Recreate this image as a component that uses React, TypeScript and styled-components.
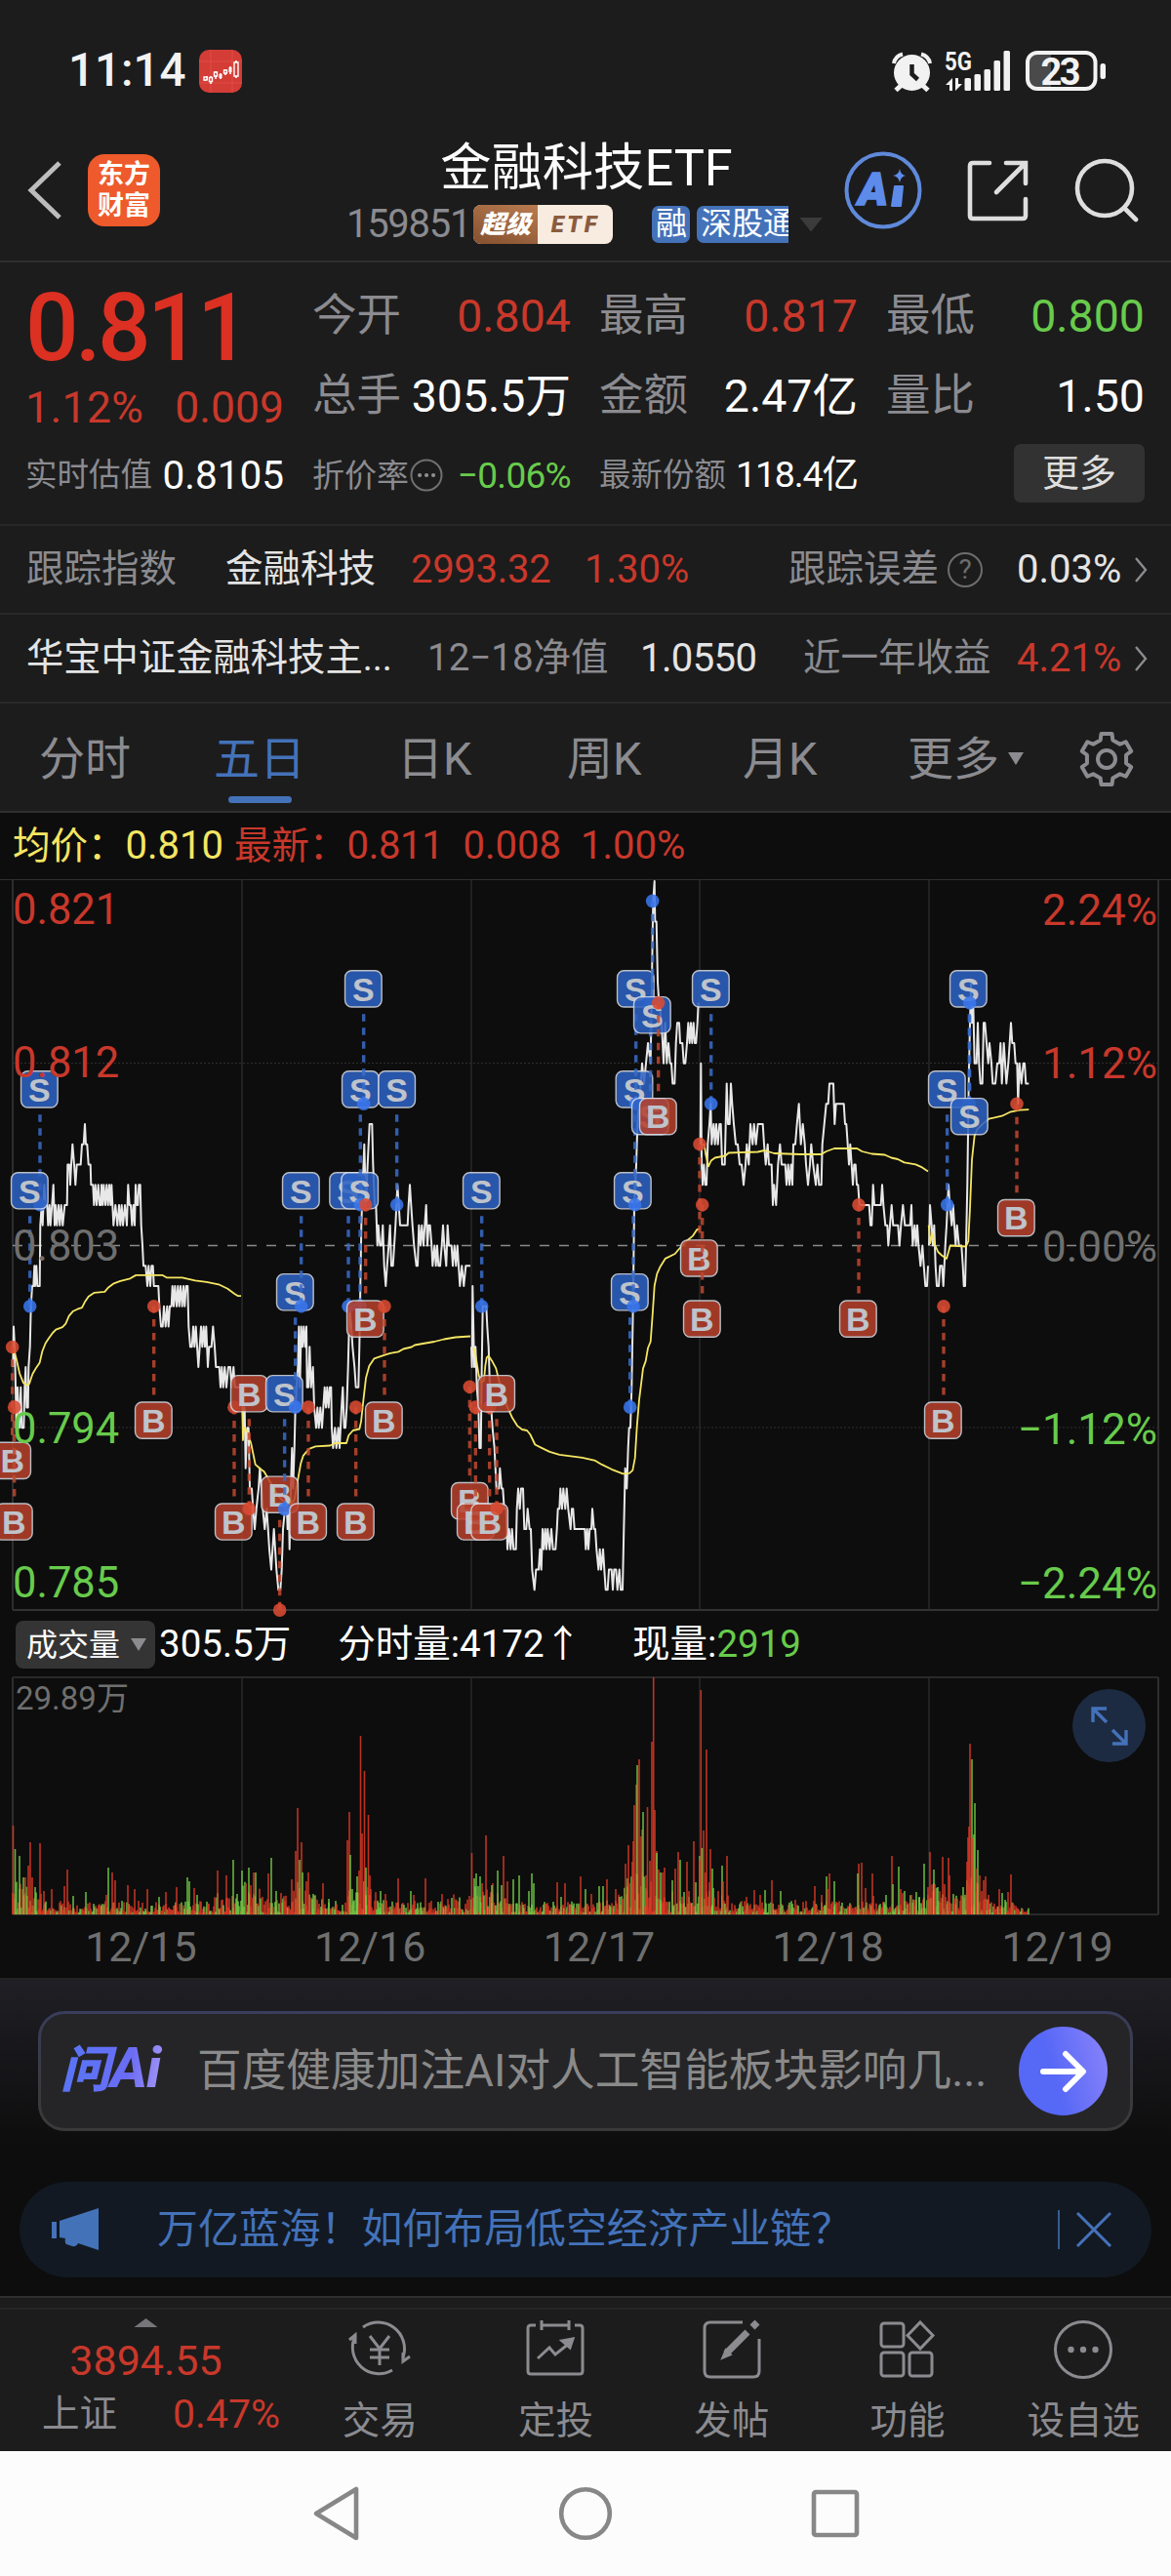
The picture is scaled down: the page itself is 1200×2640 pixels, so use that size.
import styled, { createGlobalStyle } from "styled-components";

const C = {
  bg: "#1c1c1c",
  chart: "#0d0d0d",
  line: "#2f2f2f",
  red: "#c8382b",
  hot: "#db3022",
  green: "#68cb4c",
  grey: "#8b8b90",
  dim: "#6f6f6f",
  white: "#ffffff",
  soft: "#e4e4e4",
  blue: "#4472b9",
  yellow: "#f5e663",
};

/*
=========== CHART DATA =================
x is stored in thirds of a pixel from the origin of its segment,
the second number is the distance from the previous close in ticks
*/
type Segment = { origin: number; data: string };

const PRICE: Segment[] = [
  {
    origin: 0,
    data: "40,-6 42,-4 45,-5 48,-7 50,-9 54,-7 57,-8 60,-9 64,-7 67,-9 73,-9 76,-7 79,-6 82,-8 86,-8 88,-6 92,-5 95,-3 99,-2 103,-2 106,-1 108,-2 112,-1 115,-2 122,-2 124,1 128,2 131,1 136,3 140,2 145,2 148,1 152,2 155,1 160,2 164,3 168,1 171,2 175,1 180,2 184,1 188,2 193,1 199,2 206,2 208,4 213,4 216,3 219,4 223,5 228,4 232,3 236,4 248,4 252,5 257,5 261,6 264,5 268,5 272,4 278,4 280,3 286,3 289,2 293,3 297,2 302,3 306,2 310,2 312,3 316,2 319,3 324,2 328,3 332,2 336,3 340,2 343,3 346,2 349,1 355,2 361,1 366,2 370,1 374,2 378,1 384,2 390,1 394,3 398,2 402,2 406,1 410,2 414,1 417,3 421,2 424,2 427,3 431,3 434,1 438,0 441,-1 448,-1 453,-2 457,-1 462,-2 466,-1 470,-1 473,-2 487,-2 490,-3 495,-4 500,-4 504,-3 509,-4 514,-3 518,-4 522,-3 527,-3 530,-2 534,-3 538,-2 543,-3 547,-2 551,-3 555,-2 560,-3 564,-2 568,-3 572,-2 577,-2 580,-4 585,-5 590,-5 594,-4 598,-5 602,-4 606,-5 610,-6 614,-5 618,-4 622,-5 626,-4 630,-5 634,-4 639,-6 643,-5 650,-5 655,-4 660,-5 664,-6 674,-6 678,-7 682,-6 686,-7 691,-6 696,-7 702,-6 708,-6 712,-7 718,-6 722,-7 740,-7",
  },
  {
    origin: 0,
    data: "744,-7 748,-9 752,-8 755,-11 760,-9 764,-9 768,-12 774,-12 778,-13 783,-14 788,-13 795,-12 799,-11 804,-12 808,-13 814,-14 820,-13 824,-14 828,-15 834,-16 838,-15 842,-14 846,-15 850,-16 856,-17 862,-17 866,-16 870,-14 876,-13 880,-12 884,-14 888,-13 890,-15 894,-12 898,-10 901,-12 905,-10 908,-8 912,-7 916,-6 919,-4 922,-7 926,-4 930,-5 934,-4 938,-5 942,-4 944,-7 948,-7 952,-5 956,-7 962,-6 966,-8 972,-9 976,-8 980,-9 985,-8 990,-9 994,-8 998,-7 1002,-8 1006,-7 1010,-8 1014,-7 1018,-7 1020,-9 1024,-10 1030,-9 1034,-10 1040,-9 1044,-10 1050,-8 1054,-7 1058,-9 1062,-9 1066,-8 1070,-6 1075,-3 1080,-4 1084,-5 1090,-6 1094,-7 1102,-7 1105,-5 1108,-2 1111,1 1115,3 1120,5 1125,2 1130,4 1136,6 1144,6 1147,4 1152,2 1156,2 1160,0 1163,1 1168,0 1173,0 1177,1 1181,-1 1186,-2 1190,-1 1195,0 1199,1 1203,-1 1208,-1 1212,0 1216,1 1222,3 1230,1 1253,1 1256,2 1260,3 1264,2 1268,1 1273,0 1280,-1 1284,-1 1288,1 1293,0 1297,1 1302,0 1306,1 1310,2 1314,0 1318,1 1322,1 1327,0 1330,-1 1336,0 1340,-1 1344,0 1348,-1 1353,-1 1358,0 1362,1 1366,0 1372,-1 1376,1 1380,0 1388,0 1392,-1 1397,0 1402,-1 1406,0 1410,-1 1414,-2 1420,-1 1426,-2 1432,-1 1446,-1",
  },
  {
    origin: 1350,
    data: "99,-5 101,-6 103,-2 108,-6 112,-5 116,-7 121,-8 124,-10 128,-10 131,-6 134,-3 145,-3 148,-4 152,-5 156,-7 160,-8 164,-9 170,-10 176,-12 184,-12 187,-11 192,-12 196,-12 200,-13 206,-13 210,-15 215,-14 220,-15 224,-14 229,-15 236,-15 239,-13 243,-12 248,-13 252,-12 258,-12 262,-14 268,-14 272,-13 278,-14 282,-14 286,-16 293,-17 298,-16 306,-16 310,-15 314,-16 318,-14 322,-15 326,-14 330,-15 334,-14 340,-15 345,-14 350,-15 358,-15 362,-14 365,-13 370,-13 373,-12 378,-13 382,-12 388,-13 392,-12 397,-13 404,-14 408,-13 412,-13 416,-14 448,-14 451,-15 455,-14 459,-15 463,-14 468,-14 471,-13 476,-14 480,-14 484,-15 490,-16 494,-15 498,-16 504,-15 508,-16 512,-17 518,-17 522,-16 530,-16 534,-17 538,-16 544,-16 548,-17 554,-16 558,-17 564,-17 568,-14 572,-11 577,-12 581,-10 584,-9 588,-9 592,-7 596,-3 600,2 606,4 610,6 614,7 620,8 624,9 630,8 636,9 642,10 650,9 654,13 658,17 662,18 664,16 668,16 672,13 676,12 684,11 690,9 695,11 700,9 705,10 710,9 714,9 718,8 724,8 728,10 732,11 738,11 741,10 748,10 752,9 757,9 762,10 766,11 770,10 774,11 778,10 782,11 786,10 790,10 794,11 797,12",
  },
  {
    origin: 1350,
    data: "803,5 805,9 807,4 810,3 814,4 818,3 822,3 826,5 831,6 835,7 838,5 844,6 848,5 852,6 857,5 862,6 866,6 870,4 878,4 881,6 884,8 888,6 893,6 897,8 901,7 906,6 912,5 918,5 924,4 930,4 936,3 942,4 946,5 952,4 957,6 964,5 968,6 974,5 980,6 995,6 999,5 1004,4 1010,5 1014,4 1022,4 1026,2 1030,3 1036,2 1042,4 1048,5 1053,4 1064,4 1068,3 1073,4 1077,3 1082,4 1086,3 1089,5 1095,5 1100,6 1106,7 1112,5 1118,6 1124,5 1128,4 1134,3 1140,4 1144,5 1150,4 1158,3 1163,4 1168,3 1175,3 1178,5 1184,6 1190,7 1196,7 1200,8 1212,8 1216,6 1220,7 1244,7 1248,6 1252,6 1256,5 1260,4 1264,5 1268,4 1272,3 1276,4 1280,4 1284,3 1288,3 1292,2 1322,2 1326,1 1330,1 1334,3 1338,2 1358,2 1362,3 1366,2 1372,1 1378,1 1381,0 1386,1 1391,2 1396,1 1411,1 1415,0 1420,1 1426,2 1432,1 1448,1 1452,2 1456,0 1462,1 1466,0 1470,1 1474,0 1480,-1 1486,0 1490,-1 1495,-2 1500,-2 1503,-1",
  },
  {
    origin: 2400,
    data: "456,0 459,2 464,1 468,0 472,1 476,-1 480,-2 486,-2 490,-1 496,-1 500,-2 506,0 510,1 516,3 520,2 526,1 530,2 534,1 538,0 542,1 548,0 556,0 560,-1 563,-2 567,-2 570,0 574,3 578,8 582,11 585,13 588,11 592,12 596,9 602,9 606,11 610,9 614,8 620,8 624,11 628,11 633,10 638,9 642,10 648,9 652,8 660,8 666,9 672,9 676,10 680,8 686,10 690,9 694,8 700,9 704,10 708,11 712,10 718,10 722,9 727,9 730,7 734,9 740,8 746,9 750,9 754,8 763,8",
  },
];

// moving average, the second number is the depth below the chart's top edge
const AVERAGE: Segment[] = [
  {
    origin: 0,
    data: "40,985 50,1010 60,1040 72,1060 82,1064 90,1062 100,1042 112,1028 122,1018 130,995 140,978 150,968 162,957 172,950 192,945 202,938 212,922 225,912 238,908 252,905 262,892 272,882 290,874 322,872 332,864 350,855 370,850 400,845 418,838 500,838 512,843 560,843 600,849 635,852 672,857 700,866 720,876 732,881 741,881",
  },
  {
    origin: 0,
    data: "745,1110 747,1178 750,1152 760,1160 772,1185 785,1228 800,1237 812,1243 825,1258 840,1275 855,1293 870,1303 893,1310 905,1300 915,1262 925,1225 932,1210 950,1196 970,1191 1015,1189 1030,1184 1065,1184 1072,1168 1085,1158 1105,1155 1110,1140 1118,1090 1125,1050 1135,1025 1150,1010 1185,1002 1200,999 1225,996 1240,990 1265,986 1275,982 1300,979 1335,975 1365,970 1400,966 1446,964",
  },
  {
    origin: 1350,
    data: "103,990 108,990 115,1015 122,1045 130,1060 138,1055 142,1025 146,1008 152,1004 162,1014 175,1030 185,1058 195,1085 210,1110 225,1132 240,1148 255,1156 270,1158 280,1166 295,1187 315,1194 340,1202 370,1208 440,1214 480,1220 500,1228 530,1238 565,1247 585,1246 595,1240 602,1215 608,1150 615,1095 627,1030 635,1015 642,988 650,975 656,920 662,860 670,835 680,820 695,804 725,794 735,786 760,768 780,757 793,744 802,742",
  },
  {
    origin: 1350,
    data: "808,570 815,568 820,590 828,614 836,602 848,596 880,592 890,586 980,584 1000,581 1030,587 1110,589 1150,589 1175,589 1190,583 1215,577 1285,577 1300,583 1330,588 1370,590 1390,596 1410,599 1430,606 1465,610 1485,616 1503,624",
  },
  {
    origin: 2400,
    data: "455,735 460,772 466,752 474,775 484,790 495,797 510,804 516,790 521,777 570,779 577,768 582,700 588,600 596,550 605,537 620,527 640,516 680,510 705,502 735,498 763,497",
  },
];

// [side, badge x, badge y, dot x, dot y]
type Mark = ["B" | "S", number, number, number, number];

const MARKS: Mark[] = [
  ["S", 121, 455, 123, 693],
  ["S", 91, 664, 92, 902],
  ["B", 38, 1220, 38, 986],
  ["B", 43, 1346, 44, 1110],
  ["B", 472, 1137, 473, 902],
  ["B", 718, 1346, 720, 1110],
  ["B", 766, 1082, 766, 1319],
  ["B", 860, 1290, 860, 1528],
  ["S", 874, 1082, 875, 1320],
  ["S", 907, 873, 908, 1110],
  ["S", 925, 664, 926, 902],
  ["B", 947, 1346, 948, 1110],
  ["S", 1070, 664, 1071, 902],
  ["B", 1093, 1346, 1094, 1110],
  ["S", 1106, 664, 1107, 902],
  ["S", 1108, 455, 1108, 693],
  ["S", 1117, 248, 1118, 485],
  ["B", 1123, 928, 1124, 693],
  ["B", 1180, 1137, 1182, 902],
  ["S", 1220, 455, 1220, 693],
  ["B", 1444, 1303, 1444, 1068],
  ["B", 1462, 1346, 1462, 1110],
  ["S", 1480, 664, 1481, 902],
  ["B", 1505, 1346, 1505, 1110],
  ["B", 1526, 1082, 1527, 1319],
  ["S", 1936, 873, 1937, 1110],
  ["S", 1945, 664, 1947, 902],
  ["S", 1950, 455, 1952, 693],
  ["S", 1954, 248, 1955, 485],
  ["S", 1999, 511, 2000, 277],
  ["S", 2005, 302, 2006, 67],
  ["B", 2023, 511, 2024, 277],
  ["B", 2149, 803, 2151, 568],
  ["B", 2158, 928, 2159, 693],
  ["S", 2185, 248, 2186, 485],
  ["B", 2638, 928, 2640, 693],
  ["B", 2899, 1137, 2901, 902],
  ["S", 2911, 455, 2912, 693],
  ["S", 2977, 248, 2980, 485],
  ["S", 2980, 511, 2981, 277],
  ["B", 3124, 720, 3126, 485],
];

// traded volume peaks: x, colour, height
const PEAKS =
  "13.5r91 15.5g67 20g60 24g38 26r38 31r74 29r50 33r38 36g28 41r73 45r24 53r26 66r29 69r46 75g19 88g23 111g48 109r20 115r43 118r35 131r30 138r26 151r26 163g18 170r23 181r28 192g38 194g34 199r27 202g20 223r45 232r40 239g56 248g45 255g48 252r32 260r43 257r30 262g43 275r42 278g58 283g24 288r22 299r36 303r65 305r109 307g56 309r74 310g43 314r34 316r43 321g21 331r32 337g16 356r76 358r105 359g61 361g26 366g39 368r45 369.5r183 371r83 373.5r147 377.5r102 379r40 375g48 390g24 395r21 408r37 421g24 424r20 436r37 453r21 483.5r63 486g37 488g42 492g39 498r81 494r32 505r32 504g30 510g45 516r60 514g30 520r34 526g36 532g40 545g42 542g24 547g32 571r33 579r32 575g18 595r39 600g26 606r21 614g29 618g29 622r36 631r26 635g18 641r52 643g37 644r71 648r54 649r75 650r112 652r133 653g153 655r159 657r80 658r87 659g105 662r40 663.5r110 666r55 668r177 669.7r243 671r107 673r65 673g63 675r46 677g43 679r43 681r48 689g35 692r47 695r64 697g56 704r54 701g23 706r24 711r75 713g33 717g60 717r56 718.3r230 719.5g68 721r86 723r43 724r169 728r67 727r33 730g47 740g50 741r34 745r60 765r18 773r25 779r20 784g25 791r35 800g24 815r15 835r29 842r20 847g39 848r26 850r42 855g34 880r52 879g42 883r53 887r27 894r42 895r19 908g20 914r60 915g31 921g49 923r26 927g24 934r20 939g23 942g18 947g52 951r28 953r64 957g46 958r31 961g28 966r59 968r31 972r58 973r40 987g28 991r54 992r79 993r90 994r175 996g159 996.5r78 998g82 999g114 1000r47 1002g66 1004r40 1006r24 1008r35 1010r39 1013r20 1024r26 1027g22 1030g15 1033r23 1036r41";

const VERTICALS = [13, 248, 483, 717, 952, 1187];
const DATES = ["12/15", "12/16", "12/17", "12/18", "12/19"];

const depth = (v: number) => v / 2.0103 - 11;

const toPath = ({ origin, data }: Segment, y: (v: number) => number) =>
  data
    .split(" ")
    .map((pair) => pair.split(",").map(Number))
    .map(([x, v]) => `${((x + origin) / 3).toFixed(1)},${y(v).toFixed(1)}`)
    .join(" ");

const noise = (n: number) => {
  const s = Math.sin(n * 127.1 + 11.7) * 43758.5453;
  return s - Math.floor(s);
};

// the low bars that fill the floor between the peaks
const floorBars = Array.from({ length: 1042 }, (_, i) => {
  const x = 13 + i;
  const day = (x - 13) % 234.8;
  const busy =
    (day < 36 ? 34 - day * 0.5 : 12) +
    (day > 205 ? 8 : 0) +
    22 * Math.exp(-(((x - 305) / 16) ** 2)) +
    22 * Math.exp(-(((x - 370) / 16) ** 2)) +
    34 * Math.exp(-(((x - 656) / 20) ** 2)) +
    28 * Math.exp(-(((x - 996) / 11) ** 2));
  const fade = x > 1042 ? 0.4 : 1;
  return {
    x,
    h: 2 + busy * fade * noise(i) ** 1.5,
    up: noise(i + 5000) < 0.62,
  };
});

const peakBars = PEAKS.split(" ").map((p) => {
  const [, x, side, h] = p.match(/([\d.]+)([rg])([\d.]+)/)!;
  return { x: Number(x), h: Number(h), up: side === "r" };
});

/*
=========== DRAWINGS =================
*/
function PriceChart() {
  return (
    <Drawing width={1200} height={760} viewBox='0 0 1200 760'>
      <path d='M0 0.5H1200' stroke={C.line} />
      <path d='M13 749H1187' stroke='#333' strokeWidth='2' />
      {VERTICALS.map((x, i) => (
        <path
          key={x}
          d={`M${x} 1V749`}
          stroke='#2d2d2d'
          strokeWidth={i % 5 ? 1.3 : 2}
        />
      ))}
      {[188.5, 562].map((y) => (
        <path
          key={y}
          d={`M13 ${y}H1187`}
          stroke='#2e2e2e'
          strokeDasharray='2 2'
        />
      ))}
      <path
        d='M13 375.5H1184'
        stroke='#8a8a8a'
        strokeWidth='1.5'
        strokeDasharray='10 10'
      />
      <g fill='none' strokeLinejoin='round'>
        {PRICE.map((s, i) => (
          <polyline
            key={i}
            points={toPath(s, (v) => depth(777 - v * 41.72))}
            stroke='#e8e8e8'
            strokeWidth='2'
          />
        ))}
        {AVERAGE.map((s, i) => (
          <polyline
            key={i}
            points={toPath(s, depth)}
            stroke={C.yellow}
            strokeWidth='1.8'
          />
        ))}
      </g>
      {MARKS.map(([side, bx, by, dx, dy], i) => {
        const x = bx / 3;
        const y = depth(by);
        const dotY = depth(dy);
        const down = dotY > y ? 1 : -1;
        const sell = side === "S";
        return (
          <g key={i}>
            <path
              d={`M${dx / 3} ${y + down * 26}V${dotY}`}
              stroke={sell ? "#3a6cc8" : "#c0472f"}
              strokeWidth='3.4'
              strokeDasharray='7.5 6.5'
              opacity='.85'
            />
            <rect
              x={x - 18.8}
              y={y - 18.6}
              width='37.6'
              height='37.2'
              rx='7'
              fill={sell ? "#2d62c4" : "#b8412c"}
              stroke='#d8dce4'
              strokeWidth='1.4'
              opacity='.86'
            />
            <BadgeLetter x={x} y={y + 12.3}>
              {side}
            </BadgeLetter>
            <circle
              cx={dx / 3}
              cy={dotY}
              r='6.8'
              fill={sell ? "#3975ea" : "#d94b33"}
              opacity='.88'
            />
          </g>
        );
      })}
    </Drawing>
  );
}

function VolumeChart() {
  return (
    <Drawing width={1200} height={246} viewBox='0 0 1200 246'>
      <path d='M13 1H1187M13 244H1187' stroke='#333' strokeWidth='1.5' />
      {VERTICALS.map((x, i) => (
        <path
          key={x}
          d={`M${x} 1V244`}
          stroke='#2d2d2d'
          strokeWidth={i % 5 ? 1.3 : 2}
        />
      ))}
      {[...floorBars, ...peakBars].map((b, i) => (
        <rect
          key={i}
          x={b.x - 0.8}
          y={244 - b.h}
          width='1.6'
          height={b.h}
          fill={b.up ? "#dc3a26" : "#72d048"}
          opacity='.85'
        />
      ))}
    </Drawing>
  );
}

function Gear() {
  const points = Array.from({ length: 6 }, (_, i) => {
    const at = (deg: number, r: number) => {
      const a = ((i * 60 + deg - 90) * Math.PI) / 180;
      return `${30 + Math.cos(a) * r},${30 + Math.sin(a) * r}`;
    };
    return [at(-18, 20.5), at(-12, 26.5), at(12, 26.5), at(18, 20.5)].join(" ");
  }).join(" ");
  return (
    <svg width='60' height='60' viewBox='0 0 60 60' fill='none'>
      <g stroke={C.grey} strokeWidth='4' strokeLinejoin='round'>
        <polygon points={points} />
        <circle cx='30' cy='30' r='9' />
      </g>
    </svg>
  );
}

function Chevron() {
  return (
    <svg width='14' height='28' viewBox='0 0 14 28' fill='none'>
      <path d='M2 2L12 14L2 26' stroke={C.grey} strokeWidth='2.4' />
    </svg>
  );
}

function StatusIcons() {
  return (
    <svg width='224' height='54' viewBox='914 46 224 54'>
      <g fill='#f2f2f2'>
        <circle cx='934.5' cy='74.5' r='18.5' />
        <path
          d='M916 65A12 12 0 0 1 925 55.5M953 65A12 12 0 0 0 944 55.5'
          fill='none'
          stroke='#f2f2f2'
          strokeWidth='4'
        />
        <path
          d='M924 87L918 92.5M945 87L951 92.5'
          stroke='#f2f2f2'
          strokeWidth='5'
        />
        <path
          d='M934.5 66V76L940.5 81.5'
          fill='none'
          stroke='#1c1c1c'
          strokeWidth='4.5'
        />
        <rect x='988.5' y='80' width='6.5' height='13' rx='1.5' />
        <rect x='998.5' y='76' width='6.5' height='17' rx='1.5' />
        <rect x='1008.5' y='71' width='6.5' height='22' rx='1.5' />
        <rect x='1018.5' y='62' width='6.5' height='31' rx='1.5' />
        <rect x='1028.5' y='52' width='6.5' height='41' rx='1.5' />
        <path d='M969 87L976 80V93H973V87ZM979 80H982V86H986L979 93Z' />
        <rect x='1127.5' y='65' width='5.5' height='16' rx='2.5' />
      </g>
      <path
        d='M1063 54H1077V91H1063Q1053 91 1053 80V65Q1053 54 1063 54Z'
        fill='#4a4a4a'
      />
      <rect
        x='1053'
        y='54'
        width='69.5'
        height='37'
        rx='10'
        fill='none'
        stroke='#f2f2f2'
        strokeWidth='4'
      />
      <SvgText x='968' y='72' fontSize='26' textLength='28' lengthAdjust='spacingAndGlyphs'>
        5G
      </SvgText>
      <SvgText x='1066.5' y='86.5' fontSize='38' textLength='41'>
        23
      </SvgText>
    </svg>
  );
}

const TAB_ICONS = {
  trade: (
    <>
      <path d='M15 10A27 27 0 0 1 56 41M45 54A27 27 0 0 1 7 19' />
      <path d='M1 23L7 18V27M63 40L56 45V36' />
      <path d='M22 19L32 32L42 19M32 32V49M22 33H42M22 41H42' />
    </>
  ),
  invest: (
    <>
      <path d='M12 8H7Q4 8 4 11V55Q4 58 7 58H57Q60 58 60 55V11Q60 8 57 8H52M18 8H46M18 3V13M46 3V13' />
      <path d='M14 42L26 31L32 38L47 26' />
      <path d='M39 24L50 22L47 31Z' fill={C.grey} />
    </>
  ),
  post: (
    <>
      <path d='M43 5H10Q4 5 4 11V55Q4 61 10 61H54Q60 61 60 55V22' />
      <path d='M26 37L48 15' strokeWidth='7' />
      <path d='M53 10L58 5' strokeWidth='7' />
      <path d='M23 41L26 34L30 38Z' fill={C.grey} />
    </>
  ),
  tools: (
    <>
      <rect x='5' y='6' width='23' height='24' rx='3' />
      <rect x='5' y='36' width='23' height='24' rx='3' />
      <rect x='34' y='36' width='23' height='24' rx='3' />
      <path d='M45 5L58 18.5L45 32L32 18.5Z' />
    </>
  ),
  add: (
    <>
      <circle cx='32' cy='33' r='28.5' />
      <g fill={C.grey} stroke='none'>
        <circle cx='19.5' cy='33' r='3.2' />
        <circle cx='32' cy='33' r='3.2' />
        <circle cx='44.5' cy='33' r='3.2' />
      </g>
    </>
  ),
};

const TABS: { icon: keyof typeof TAB_ICONS; label: string }[] = [
  { icon: "trade", label: "交易" },
  { icon: "invest", label: "定投" },
  { icon: "post", label: "发帖" },
  { icon: "tools", label: "功能" },
  { icon: "add", label: "设自选" },
];

/*
=========== SECTIONS =================
*/
function Header() {
  return (
    <TopBar>
      <svg width='36' height='60' viewBox='0 0 36 60' fill='none'>
        <path d='M33 2L4 30L33 58' stroke='#bdbdbd' strokeWidth='5' />
      </svg>
      <Logo>
        <span>东方</span>
        <span>财富</span>
      </Logo>
      <TitleBlock>
        <h1>金融科技ETF</h1>
        <SubTitle>
          <T $size={40} $color={C.grey} $ls={-1.3}>
            159851
          </T>
          <SuperBadge>
            <b>超级</b>
            <i>ETF</i>
          </SuperBadge>
          <Tag $width={39}>融</Tag>
          <Tag $width={94} $cut>
            深股通
          </Tag>
          <Triangle $w={24} $h={15} $color='#3b3b3b' />
        </SubTitle>
      </TitleBlock>
      <HeaderIcons>
        <svg width='80' height='80' viewBox='0 0 80 80' fill='none'>
          <circle cx='40' cy='40' r='37.5' stroke='#5f89da' strokeWidth='4' />
          <AiLetter x='14.5' y='55'>
            A
          </AiLetter>
          <path
            d='M52 36H60L58 56H49Z'
            fill='#5d8bea'
            stroke='#5d8bea'
            strokeWidth='2'
            strokeLinejoin='round'
          />
          <path
            d='M57 18Q58 24 63 25Q58 26 57 32Q56 26 50 25Q56 24 57 18Z'
            fill='#5d8bea'
          />
        </svg>
        <svg width='64' height='64' viewBox='0 0 64 64' fill='none'>
          <g stroke='#dedede' strokeWidth='4.6' strokeLinecap='round'>
            <path d='M24 4H7Q4 4 4 7V58Q4 61 7 61H58Q61 61 61 58V41' />
            <path d='M41 4H61V25M60 5L31 34' />
          </g>
        </svg>
        <svg width='66' height='66' viewBox='0 0 66 66' fill='none'>
          <g stroke='#dedede' strokeWidth='4.6' strokeLinecap='round'>
            <circle cx='31' cy='31' r='28' />
            <path d='M51 51L63 63' />
          </g>
        </svg>
      </HeaderIcons>
    </TopBar>
  );
}

type QuoteProps = { label: string; value: string; color?: string };

function Quote({ label, value, color = C.white }: QuoteProps) {
  return (
    <Pair>
      <T $size={45.5} $color={C.grey}>
        {label}
      </T>
      <T $size={46.5} $color={color}>
        {value}
      </T>
    </Pair>
  );
}

function QuotePanel() {
  return (
    <QuoteGrid>
      <PriceBlock>
        <T $size={96} $color={C.hot} $weight={500} $ls={-3.6}>
          0.811
        </T>
        <div>
          <T $size={44.5} $color={C.red} $ls={0.4}>
            1.12%
          </T>
          <T $size={44.5} $color={C.red}>
            0.009
          </T>
        </div>
      </PriceBlock>
      <Quote label='今开' value='0.804' color={C.red} />
      <Quote label='最高' value='0.817' color={C.red} />
      <Quote label='最低' value='0.800' color={C.green} />
      <Quote label='总手' value='305.5万' />
      <Quote label='金额' value='2.47亿' />
      <Quote label='量比' value='1.50' />
      <Pair>
        <T $size={32.5} $color={C.grey}>
          实时估值
        </T>
        <T $size={40.5} $color={C.white}>
          0.8105
        </T>
      </Pair>
      <Pair>
        <T $size={33} $color={C.grey}>
          折价率
        </T>
        <svg width='36' height='36' viewBox='0 0 36 36' fill='none'>
          <circle cx='18' cy='18' r='15.5' stroke='#707070' strokeWidth='2' />
          <path
            d='M11 18h.1M18 18h.1M25 18h.1'
            stroke='#909090'
            strokeWidth='4'
            strokeLinecap='round'
          />
        </svg>
        <T $size={37} $color={C.green} $ls={-0.7} $push>
          −0.06%
        </T>
      </Pair>
      <Pair>
        <T $size={32.5} $color={C.grey}>
          最新份额
        </T>
        <T $size={37.5} $color={C.white} $ls={-1.1}>
          118.4亿
        </T>
      </Pair>
      <MoreButton>更多</MoreButton>
    </QuoteGrid>
  );
}

function InfoRows() {
  return (
    <>
      <InfoRow $cols='204px 190px 178px 209px 163px 71px 120px auto'>
        <T $size={38.5} $color={C.grey}>
          跟踪指数
        </T>
        <T $size={38.5} $color={C.soft}>
          金融科技
        </T>
        <T $size={40} $color={C.red} $ls={-0.3}>
          2993.32
        </T>
        <T $size={40} $color={C.red}>
          1.30%
        </T>
        <T $size={38.5} $color={C.grey}>
          跟踪误差
        </T>
        <Question>?</Question>
        <T $size={40} $color={C.soft}>
          0.03%
        </T>
        <Chevron />
      </InfoRow>
      <InfoRow $cols='411px 218px 167px 219px 120px auto'>
        <T $size={38.3} $color={C.soft}>
          华宝中证金融科技主...
        </T>
        <T $size={38.5} $color={C.grey}>
          12−18净值
        </T>
        <T $size={40} $color={C.soft} $ls={-0.6}>
          1.0550
        </T>
        <T $size={38.5} $color={C.grey}>
          近一年收益
        </T>
        <T $size={40} $color={C.red}>
          4.21%
        </T>
        <Chevron />
      </InfoRow>
    </>
  );
}

function Search() {
  return (
    <AiSection>
      <AiBox>
        <AiLogo>
          问<span>Ai</span>
        </AiLogo>
        <T $size={45.7} $color='#8a8a8a'>
          百度健康加注AI对人工智能板块影响几...
        </T>
        <AiGo>
          <svg width='50' height='44' viewBox='0 0 50 44' fill='none'>
            <path
              d='M4 22H44M27 4L45 22L27 40'
              stroke='#fff'
              strokeWidth='6'
              strokeLinecap='round'
              strokeLinejoin='round'
            />
          </svg>
        </AiGo>
      </AiBox>
      <Banner>
        <svg width='52' height='46' viewBox='0 0 52 46' fill={C.blue}>
          <path d='M1 15H6V32H1ZM9 14L49 1V44L28 37Q26 41 22 40L16 38Q14 36 15 32L9 31Z' />
        </svg>
        <T $size={41.9} $color={C.blue}>
          万亿蓝海！如何布局低空经济产业链？
        </T>
        <svg width='60' height='42' viewBox='0 0 60 42' fill='none' stroke={C.blue}>
          <path d='M2 1V41' strokeWidth='1.5' />
          <path d='M21 4L55 38M55 4L21 38' strokeWidth='3' />
        </svg>
      </Banner>
    </AiSection>
  );
}

export default function App() {
  return (
    <Screen>
      <Global />
      <StatusBar>
        <T $size={47.5} $color='#f2f2f2' $weight={500}>
          11:14
        </T>
        <svg width='44' height='44' viewBox='0 0 44 44'>
          <rect width='44' height='44' rx='10' fill='#d43c36' />
          <path d='M0 12H44M0 34H44M12 0V44M34 0V44' stroke='#e05a52' strokeWidth='.6' />
          <path
            d='M6 28V32M8 27V31M12 33V35M12 27V28M17 22V30M22 24V30M27 20V26M32 17V25M38 11V29'
            stroke='#fff'
            strokeWidth='1.6'
          />
          <path
            d='M5 28h3v3h-3zM10.5 28.500h3v4h-3zM15.500 23h3v4h-3zM25.500 21h3v3h-3zM36 13h4v14h-4z'
            fill='#d43c36'
            stroke='#fff'
            strokeWidth='1.4'
          />
          <path d='M20.500 25h3v4h-3zM30.500 18h3v5h-3z' fill='#fff' />
        </svg>
        <StatusIcons />
      </StatusBar>
      <Header />
      <QuotePanel />
      <InfoRows />
      <Periods>
        <Period>分时</Period>
        <Period $active>五日</Period>
        <Period>日K</Period>
        <Period>周K</Period>
        <Period>月K</Period>
        <Period>
          更多
          <Triangle $w={16} $h={13} $color={C.grey} />
        </Period>
        <Gear />
      </Periods>

      <Legend>
        <T $size={38.5} $color={C.yellow}>
          均价：
        </T>
        <T $size={40} $color={C.yellow}>
          0.810
        </T>
        <T $size={38.5} $color={C.red}>
          最新：
        </T>
        <T $size={40} $color={C.red} $ls={-0.3}>
          0.811
        </T>
        <T $size={40} $color={C.red}>
          0.008
        </T>
        <T $size={40} $color={C.red}>
          1.00%
        </T>
      </Legend>

      <ChartBox>
        <PriceChart />
        <Scale>
          <T $size={43.5} $color={C.red}>0.821</T>
          <T $size={43.5} $color={C.red}>0.812</T>
          <T $size={43.5} $color={C.dim}>0.803</T>
          <T $size={43.5} $color={C.green}>0.794</T>
          <T $size={43.5} $color={C.green}>0.785</T>
        </Scale>
        <Scale $right>
          <T $size={44} $color={C.red}>2.24%</T>
          <T $size={44} $color={C.red}>1.12%</T>
          <T $size={44} $color={C.dim}>0.00%</T>
          <T $size={44} $color={C.green}>−1.12%</T>
          <T $size={44} $color={C.green}>−2.24%</T>
        </Scale>
      </ChartBox>

      <VolumeHead>
        <Picker>
          成交量
          <Triangle $w={16} $h={13} $color={C.grey} />
        </Picker>
        <T $size={38.5} $color={C.white}>
          305.5万
        </T>
        <T $size={38.5} $color={C.white}>
          分时量:4172↑
        </T>
        <T $size={38.5} $color={C.white}>
          现量:<em>2919</em>
        </T>
      </VolumeHead>
      <VolumeBox>
        <VolumeChart />
        <Peak>29.89万</Peak>
        <Expand>
          <svg width='40' height='44' viewBox='0 0 40 44' fill='none'>
            <path
              d='M3 18V4H17M4 5L17 18M37 26V40H23M36 39L23 26'
              stroke={C.blue}
              strokeWidth='3.4'
            />
          </svg>
        </Expand>
      </VolumeBox>
      <Dates>
        {DATES.map((d) => (
          <span key={d}>{d}</span>
        ))}
      </Dates>

      <Search />

      <Dock>
        <IndexCell>
          <Triangle $w={24} $h={9} $color='#77777b' $up />
          <T $size={43} $color={C.red}>
            3894.55
          </T>
          <div>
            <T $size={38.5} $color={C.grey}>
              上证
            </T>
            <T $size={41} $color={C.red}>
              0.47%
            </T>
          </div>
        </IndexCell>
        {TABS.map(({ icon, label }) => (
          <DockItem key={label}>
            <svg
              width='72'
              height='66'
              viewBox='-4 0 72 66'
              fill='none'
              stroke={C.grey}
              strokeWidth='3'
            >
              {TAB_ICONS[icon]}
            </svg>
            {label}
          </DockItem>
        ))}
      </Dock>
      <SystemNav>
        <svg width='48' height='58' viewBox='0 0 48 58' fill='none'>
          <path
            d='M45 4V54L4 29Z'
            stroke='#878787'
            strokeWidth='4.6'
            strokeLinejoin='round'
          />
        </svg>
        <svg width='58' height='58' viewBox='0 0 58 58' fill='none'>
          <circle cx='29' cy='29' r='24.8' stroke='#878787' strokeWidth='4.6' />
        </svg>
        <svg width='52' height='52' viewBox='0 0 52 52' fill='none'>
          <rect
            x='4'
            y='4'
            width='44'
            height='44'
            rx='2'
            stroke='#878787'
            strokeWidth='4.6'
          />
        </svg>
      </SystemNav>
    </Screen>
  );
}

/*
=========== STYLES =================
*/
const Global = createGlobalStyle`
  * {
    box-sizing: border-box;
  }

  body {
    margin: 0;
    background: ${C.bg};
    font-family: Roboto, "Noto Sans CJK SC", sans-serif;
  }

  svg {
    display: block;
    flex: none;
  }
`;

const Screen = styled.div`
  display: flex;
  flex-direction: column;
  width: 1200px;
  height: 2640px;
  overflow: hidden;
  background: ${C.bg};
`;

const T = styled.span<{
  $size: number;
  $color: string;
  $weight?: number;
  $ls?: number;
  $push?: boolean;
}>`
  font-size: ${(p) => p.$size}px;
  font-weight: ${(p) => p.$weight ?? 400};
  letter-spacing: ${(p) => p.$ls ?? 0}px;
  color: ${(p) => p.$color};
  line-height: 1;
  white-space: nowrap;
  ${(p) => p.$push && "margin-left: auto;"}

  em {
    font-style: normal;
    color: ${C.green};
  }
`;

const Triangle = styled.i<{
  $w: number;
  $h: number;
  $color: string;
  $up?: boolean;
}>`
  flex: none;
  width: ${(p) => p.$w}px;
  height: ${(p) => p.$h}px;
  background: ${(p) => p.$color};
  clip-path: polygon(
    ${(p) => (p.$up ? "50% 0, 100% 100%, 0 100%" : "0 0, 100% 0, 50% 100%")}
  );
`;

const SvgText = styled.text`
  font-family: Roboto, sans-serif;
  font-weight: 700;
  fill: #f2f2f2;
`;

const AiLetter = styled.text`
  font-family: Roboto, sans-serif;
  font-size: 46px;
  font-style: italic;
  font-weight: 900;
  fill: #5d8bea;
  stroke: #5d8bea;
  stroke-width: 1.6px;
`;

const BadgeLetter = styled.text`
  font-family: "Liberation Sans", sans-serif;
  font-size: 34px;
  font-weight: 700;
  text-anchor: middle;
  fill: #bfc3cb;
`;

const Drawing = styled.svg`
  display: block;
`;

const StatusBar = styled.div`
  display: flex;
  align-items: center;
  height: 146px;
  padding-left: 70px;

  & > svg:nth-of-type(1) {
    margin-left: 13px;
  }

  & > svg:last-child {
    margin: 0 62px 0 auto;
  }
`;

const TopBar = styled.header`
  display: flex;
  align-items: center;
  height: 123px;
  padding: 0 32px 23px 28px;
  border-bottom: 2px solid ${C.line};
`;

const Logo = styled.div`
  display: flex;
  flex-direction: column;
  align-items: center;
  justify-content: center;
  gap: 4px;
  width: 74px;
  height: 74px;
  margin: 0 0 0 26px;
  border-radius: 17px;
  background: #ee5a2b;
  color: #fff;
  font-size: 27px;
  font-weight: 700;
  line-height: 28px;
`;

const TitleBlock = styled.div`
  display: flex;
  flex-direction: column;
  align-items: center;
  width: 500px;
  margin-left: 187px;
  padding-top: 2px;

  h1 {
    margin: 0;
    color: #fff;
    font-size: 52.3px;
    font-weight: 400;
    line-height: 64px;
  }
`;

const SubTitle = styled.div`
  display: flex;
  align-items: center;
  align-self: flex-start;
  height: 44px;
  margin: 4px 0 0 4px;

  ${Triangle} {
    margin-left: 11px;
  }
`;

const SuperBadge = styled.div`
  display: flex;
  align-items: center;
  width: 143px;
  height: 40px;
  margin: 0 40px 0 3px;
  border-radius: 8px;
  overflow: hidden;
  background: #f8ece0;
  font-style: italic;
  line-height: 40px;
  text-align: center;

  b {
    width: 66px;
    background: linear-gradient(20deg, #84502f, #b97b50);
    color: #fff;
    font-size: 26px;
    font-weight: 900;
  }

  i {
    flex: 1;
    color: #8b5b40;
    font-size: 24px;
    font-weight: 900;
    letter-spacing: 3px;
  }
`;

const Tag = styled.span<{ $width: number; $cut?: boolean }>`
  width: ${(p) => p.$width}px;
  height: 38px;
  margin-right: ${(p) => (p.$cut ? 0 : 7)}px;
  padding-left: 4px;
  border-radius: ${(p) => (p.$cut ? "7px 0 0 7px" : "7px")};
  overflow: hidden;
  background: ${C.blue};
  color: #fff;
  font-size: 32px;
  line-height: 36px;
  white-space: nowrap;
`;

const HeaderIcons = styled.div`
  display: flex;
  align-items: center;
  margin-left: 14px;

  svg + svg {
    margin-left: 45px;
  }

  svg:last-child {
    margin-left: 47px;
  }
`;

const QuoteGrid = styled.section`
  display: grid;
  grid-template-columns: repeat(4, 265px);
  grid-template-rows: 82px 82px 80px;
  column-gap: 29px;
  height: 270px;
  padding: 14px 0 0 26px;
  border-bottom: 2px solid #272727;
`;

const PriceBlock = styled.div`
  grid-row: span 2;
  display: flex;
  flex-direction: column;
  padding-top: 5px;

  & > div {
    display: flex;
    justify-content: space-between;
    margin-top: 12px;
  }
`;

const Pair = styled.div`
  display: flex;
  align-items: center;
  justify-content: space-between;
`;

const MoreButton = styled.button`
  justify-self: end;
  align-self: center;
  width: 134px;
  height: 60px;
  margin-top: -4px;
  padding: 0;
  border: 0;
  border-radius: 7px;
  background: #323232;
  color: #dedede;
  font: 38px/56px Roboto, "Noto Sans CJK SC", sans-serif;
`;

const InfoRow = styled.div<{ $cols: string }>`
  display: grid;
  grid-template-columns: ${(p) => p.$cols};
  align-items: center;
  height: 91px;
  padding-left: 27px;
  border-bottom: 2px solid #292929;
`;

const Question = styled.span`
  width: 36px;
  height: 36px;
  border: 2.5px solid #6d6d6f;
  border-radius: 50%;
  color: #6d6d6f;
  font-size: 28px;
  line-height: 32px;
  text-align: center;
`;

const Periods = styled.nav`
  display: grid;
  grid-template-columns: 179px 188px 174px 180px 169px 174px auto;
  align-items: center;
  height: 112px;
  padding: 3px 0 0 40px;
  border-bottom: 2px solid ${C.line};
`;

const Period = styled.span<{ $active?: boolean }>`
  position: relative;
  display: flex;
  align-items: center;
  gap: 9px;
  color: ${(p) => (p.$active ? C.blue : C.grey)};
  font-size: 47px;
  line-height: 1;

  &::after {
    content: "";
    display: ${(p) => (p.$active ? "block" : "none")};
    position: absolute;
    left: 15px;
    top: 62px;
    width: 65px;
    height: 7px;
    border-radius: 4px;
    background: ${C.blue};
  }
`;

const Legend = styled.div`
  display: flex;
  align-items: center;
  height: 68px;
  padding-left: 13px;
  background: ${C.chart};

  & > :nth-child(3) {
    margin-left: 11px;
  }

  & > :nth-child(n + 5) {
    margin-left: 20px;
  }
`;

const ChartBox = styled.div`
  position: relative;
  height: 757px;
  background: ${C.chart};
`;

// price labels float over the curves
const Scale = styled.div<{ $right?: boolean }>`
  position: absolute;
  top: 10px;
  ${(p) => (p.$right ? "right: 14px;" : "left: 13px;")}
  display: grid;
  grid-template-rows: 157px 188px 187px 158px 44px;
  text-align: ${(p) => (p.$right ? "right" : "left")};
`;

const VolumeHead = styled.div`
  display: flex;
  align-items: center;
  height: 60px;
  padding: 0 0 5px 16px;
  background: ${C.chart};

  & > :nth-child(2) {
    margin-left: 4px;
  }

  & > :nth-child(n + 3) {
    margin-left: 48px;
  }

  & > :nth-child(4) {
    margin-left: 52px;
  }
`;

const Picker = styled.div`
  display: flex;
  align-items: center;
  gap: 11px;
  width: 143px;
  height: 49px;
  padding-left: 11px;
  border-radius: 8px;
  background: #343434;
  color: #fff;
  font-size: 32px;
  line-height: 1;
`;

const VolumeBox = styled.div`
  position: relative;
  height: 246px;
  background: ${C.chart};
`;

const Peak = styled.span`
  position: absolute;
  left: 16px;
  top: 6px;
  color: ${C.dim};
  font-size: 33px;
  line-height: 1;
`;

const Expand = styled.div`
  position: absolute;
  left: 1099px;
  top: 13px;
  display: flex;
  align-items: center;
  justify-content: center;
  width: 75px;
  height: 75px;
  border-radius: 50%;
  background: #1d2b42;
`;

const Dates = styled.div`
  display: grid;
  grid-template-columns: repeat(5, 234.8px);
  height: 63px;
  padding-left: 27px;
  background: ${C.chart};
  color: ${C.dim};
  font-size: 43px;
  line-height: 62px;
  text-align: center;
`;

const AiSection = styled.section`
  height: 326px;
  padding: 32px 39px 0;
  border-top: 2px solid #222;
  background: linear-gradient(#1f1f25, ${C.chart} 170px);
`;

const AiBox = styled.div`
  display: flex;
  align-items: center;
  height: 123px;
  padding: 0 23px 0 20px;
  border: 3px solid transparent;
  border-radius: 27px;
  background:
    linear-gradient(#252527, #252527) padding-box,
    linear-gradient(#3a3d5c, #3a3a3b 70%) border-box;
`;

const AiLogo = styled.span`
  width: 140px;
  background: linear-gradient(100deg, #5b74f6 15%, #6a6cf4 50%, #b3a0f6 80%);
  background-clip: text;
  color: transparent;
  font-size: 51px;
  font-style: italic;
  font-weight: 800;
  line-height: 1.3;

  span {
    font-size: 58px;
    line-height: 1;
    letter-spacing: -1px;
  }
`;

const AiGo = styled.div`
  display: flex;
  align-items: center;
  justify-content: center;
  width: 91px;
  height: 91px;
  margin-left: auto;
  border-radius: 50%;
  background: linear-gradient(75deg, #5668f6 40%, #8c84fa);
`;

const Banner = styled.div`
  display: flex;
  align-items: center;
  height: 98px;
  margin: 52px -19px 0;
  padding: 0 37px 0 32px;
  border-radius: 49px;
  background: #121922;

  ${T} {
    margin-left: 57px;
  }

  svg:last-child {
    margin-left: auto;
  }
`;

const Dock = styled.footer`
  display: grid;
  grid-template-columns: 299px repeat(5, 180.3px);
  height: 159px;
  padding-top: 10px;
  border-top: 2px solid ${C.line};
  background: linear-gradient(#262626 0 2px, transparent 2px) 0 10px no-repeat;
`;

const IndexCell = styled.div`
  display: flex;
  flex-direction: column;
  align-items: center;
  padding-top: 11px;

  & > ${T} {
    margin-top: 13px;
  }

  & > div {
    display: flex;
    align-items: center;
    justify-content: space-between;
    width: 244px;
    margin: 13px 0 0 31px;
  }
`;

const DockItem = styled.div`
  display: flex;
  flex-direction: column;
  align-items: center;
  gap: 21px;
  padding-top: 10px;
  color: ${C.grey};
  font-size: 38.5px;
  line-height: 1;
`;

const SystemNav = styled.div`
  display: grid;
  grid-template-columns: repeat(3, 256px);
  align-items: center;
  justify-content: center;
  justify-items: center;
  height: 128px;
  background: #fcfcfc;
`;
